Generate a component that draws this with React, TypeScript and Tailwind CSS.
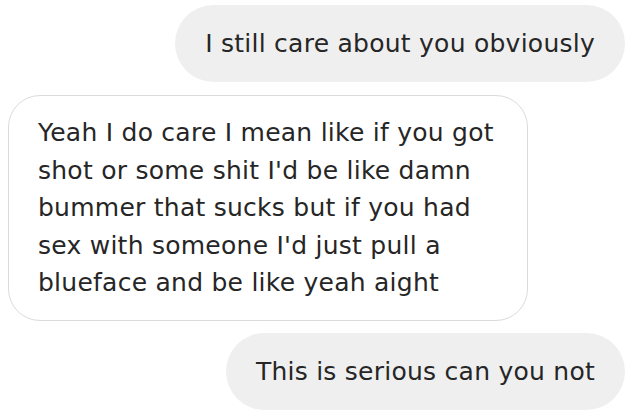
import React from 'react';

const lines = [
    "Yeah I do care I mean like if you got",
    "shot or some shit I'd be like damn",
    "bummer that sucks but if you had",
    "sex with someone I'd just pull a",
    "blueface and be like yeah aight",
];

export default function App() {
    return (
        <div
            className="w-[640px] h-[416px] bg-white overflow-hidden flex flex-col pt-[5px] text-[#262626] tracking-[0.25px]"
            style={{ fontFamily: '"DejaVu Sans", "Liberation Sans", sans-serif' }}
        >
            {/* Sent message */}
            <div className="self-end mr-[15px] h-[77px] px-[30px] rounded-full bg-[#efefef] flex items-center">
                <span className="text-[25px] leading-none">I still care about you obviously</span>
            </div>

            {/* Received message */}
            <div className="self-start ml-[8px] mt-[13px] w-[520px] h-[226px] rounded-[32px] border border-[#dbdbdb] pl-[29px] pt-[18px]">
                {lines.map((line, i) => (
                    <div key={i} className="text-[25px] leading-[37.5px] whitespace-nowrap">
                        {line}
                    </div>
                ))}
            </div>

            {/* Sent message */}
            <div className="self-end mr-[15px] mt-[12px] h-[77px] px-[30px] rounded-full bg-[#efefef] flex items-center">
                <span className="text-[25px] leading-none">This is serious can you not</span>
            </div>
        </div>
    );
}
